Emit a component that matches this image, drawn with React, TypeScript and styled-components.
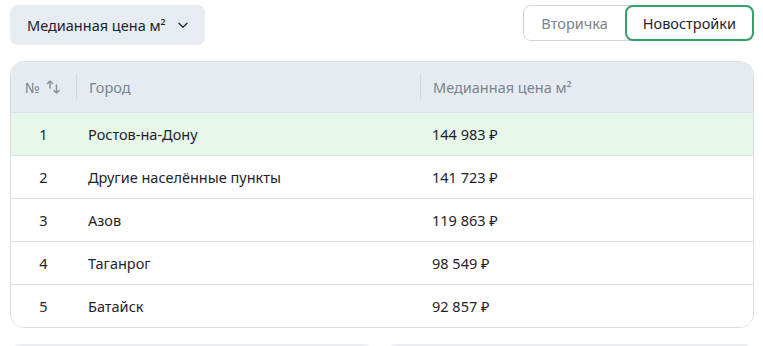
import React from 'react';
import styled, { createGlobalStyle } from 'styled-components';

const GlobalStyle = createGlobalStyle`
  body {
    margin: 0;
    background: #ffffff;
    font-family: 'Noto Sans', 'Open Sans', sans-serif;
    color: #1f2328;
  }
`;

const Page = styled.div`
  width: 763px;
  height: 346px;
  overflow: hidden;
  padding: 5px 9px 0 10px;
  box-sizing: border-box;
`;

const Toolbar = styled.div`
  display: flex;
  justify-content: space-between;
  align-items: flex-start;
  height: 56px;
`;

const Select = styled.button`
  display: flex;
  align-items: center;
  gap: 10px;
  height: 40px;
  padding: 0 15px 0 17px;
  border: none;
  border-radius: 8px;
  background: #e6ecf2;
  font-family: inherit;
  font-size: 14.5px;
  color: #1f2328;
  cursor: pointer;
`;

const Segmented = styled.div`
  display: flex;
  height: 36px;
  border: 1px solid #cfd5db;
  border-radius: 8px;
  box-sizing: border-box;
`;

const Segment = styled.button<{ $active?: boolean }>`
  height: ${({ $active }) => ($active ? '36px' : '34px')};
  margin: ${({ $active }) => ($active ? '-1px -1px -1px 0' : '0')};
  padding: 0 ${({ $active }) => ($active ? '16px' : '17px')};
  border: ${({ $active }) => ($active ? '2px solid #34a266' : 'none')};
  border-radius: 8px;
  background: #ffffff;
  font-family: inherit;
  font-size: 14.5px;
  color: ${({ $active }) => ($active ? '#1f2328' : '#7a828a')};
  cursor: pointer;
`;

const TableCard = styled.div`
  width: 744px;
  border: 1px solid #d9dee3;
  border-radius: 14px;
  overflow: hidden;
  box-sizing: border-box;
`;

const Row = styled.div<{ $head?: boolean; $highlight?: boolean }>`
  display: grid;
  grid-template-columns: 65px 344px 1fr;
  align-items: center;
  height: ${({ $head }) => ($head ? '50px' : '43px')};
  background: ${({ $head, $highlight }) =>
    $head ? '#e5ebf1' : $highlight ? '#e6f7ea' : '#ffffff'};
  border-top: ${({ $head }) => ($head ? 'none' : '1px solid #dde1e5')};
  box-sizing: border-box;
  font-size: 14.5px;
  color: ${({ $head }) => ($head ? '#7b848d' : '#1f2328')};
`;

const Cell = styled.div<{ $center?: boolean; $divider?: boolean }>`
  display: flex;
  align-items: center;
  gap: 5px;
  height: 100%;
  padding-left: ${({ $center }) => ($center ? '0' : '12px')};
  justify-content: ${({ $center }) => ($center ? 'center' : 'flex-start')};
  border-left: ${({ $divider }) => ($divider ? '1px solid #d3d9df' : 'none')};
  box-sizing: border-box;
`;

const HeadCell = styled(Cell)`
  height: 26px;
`;

const Footer = styled.div`
  display: grid;
  grid-template-columns: 360px 364px;
  gap: 16px;
  margin-top: 16px;
  padding-left: 2px;
`;

const FooterCard = styled.div`
  height: 20px;
  background: #eaeef3;
  border-radius: 8px 8px 0 0;
`;

const Chevron = () => (
  <svg width="14" height="14" viewBox="0 0 24 24" fill="none" stroke="#2a2f35" strokeWidth="2.4" strokeLinecap="round" strokeLinejoin="round">
    <path d="M5 9l7 7 7-7" />
  </svg>
);

const SortIcon = () => (
  <svg width="17" height="16" viewBox="0 0 17 16" fill="none" stroke="#8a939c" strokeWidth="1.5" strokeLinecap="round" strokeLinejoin="round">
    <path d="M5 9V2M2.5 4.5L5 2l2.5 2.5" />
    <path d="M11.5 6v8M9 11.5l2.5 2.5 2.5-2.5" />
  </svg>
);

const rows = [
  { n: 1, city: 'Ростов-на-Дону', price: '144 983 ₽' },
  { n: 2, city: 'Другие населённые пункты', price: '141 723 ₽' },
  { n: 3, city: 'Азов', price: '119 863 ₽' },
  { n: 4, city: 'Таганрог', price: '98 549 ₽' },
  { n: 5, city: 'Батайск', price: '92 857 ₽' },
];

const App: React.FC = () => (
  <>
    <GlobalStyle />
    <Page>
      <Toolbar>
        <Select>
          Медианная цена м²
          <Chevron />
        </Select>
        <Segmented>
          <Segment>Вторичка</Segment>
          <Segment $active>Новостройки</Segment>
        </Segmented>
      </Toolbar>

      <TableCard>
        <Row $head>
          <HeadCell $center>
            № <SortIcon />
          </HeadCell>
          <HeadCell $divider>Город</HeadCell>
          <HeadCell $divider>Медианная цена м²</HeadCell>
        </Row>
        {rows.map((r) => (
          <Row key={r.n} $highlight={r.n === 1}>
            <Cell $center>{r.n}</Cell>
            <Cell>{r.city}</Cell>
            <Cell>{r.price}</Cell>
          </Row>
        ))}
      </TableCard>

      <Footer>
        <FooterCard />
        <FooterCard />
      </Footer>
    </Page>
  </>
);

export default App;
